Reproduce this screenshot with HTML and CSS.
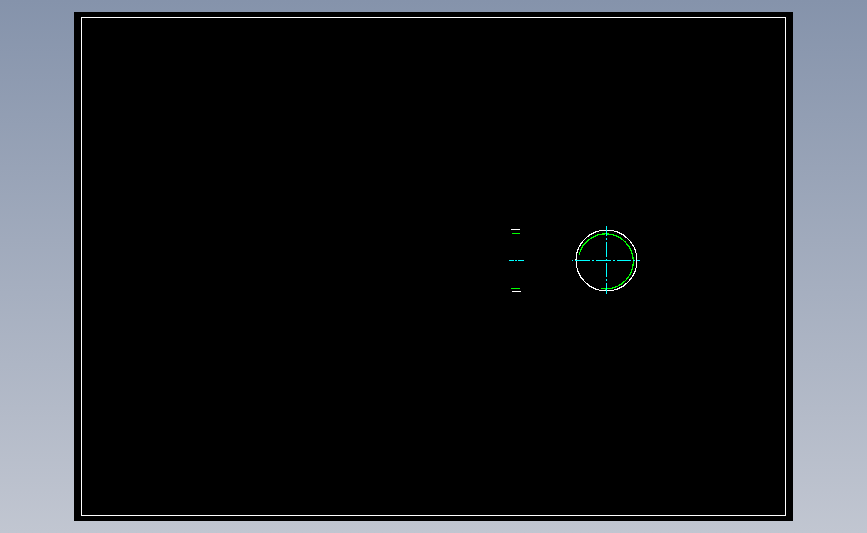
FILE: index.html
```html
<!DOCTYPE html>
<html lang="en">
<head>
<meta charset="utf-8">
<title>Drawing</title>
<link rel="stylesheet" href="styles.css">
</head>
<body>
<main class="sheet">
<svg class="drawing" viewBox="74 12 719 509" aria-label="CAD drawing">
  <rect class="white" x="81.5" y="17.5" width="704" height="498"/>
  <path class="white" d="M511 229.5H520M512 291.5H521"/>
  <path class="green" d="M512 233.5H520M511 288.5H520"/>
  <circle class="white curve" cx="606.5" cy="260.5" r="30.5"/>
  <path class="green arc" d="M579 255A27.5 27.5 0 1 1 601 288.5"/>
  <path class="cyan" d="M572 260.5H573M575 260.5H590M592 260.5H594M596 260.5H611M613 260.5H615M617 260.5H631M633 260.5H635M637 260.5H640"/>
  <path class="cyan" d="M606.5 226V236M606.5 238V240M606.5 242V257M606.5 259V261M606.5 263V277M606.5 279V281M606.5 283V294"/>
  <path class="cyan" d="M509 260.5H514M515 260.5H517M518 260.5H524"/>
</svg>
</main>
</body>
</html>
```

FILE: styles.css
```css
html, body {
  margin: 0;
  height: 100%;
}
body {
  display: flex;
  justify-content: center;
  align-items: flex-start;
  overflow: hidden;
  background: linear-gradient(to bottom, #8593ab 0%, #c1c6d1 100%);
}
.sheet {
  width: 719px;
  height: 509px;
  margin-top: 12px;
  background: #000;
}
.drawing {
  display: block;
  width: 100%;
  height: 100%;
  fill: none;
  stroke-width: 1;
  shape-rendering: crispEdges;
}
.curve { stroke-width: 1.1; }
.arc { stroke-width: 1.25; }
.white { stroke: #fff; fill: none; }
.green { stroke: #00ff00; fill: none; }
.cyan { stroke: #00ffff; fill: none; }
```
